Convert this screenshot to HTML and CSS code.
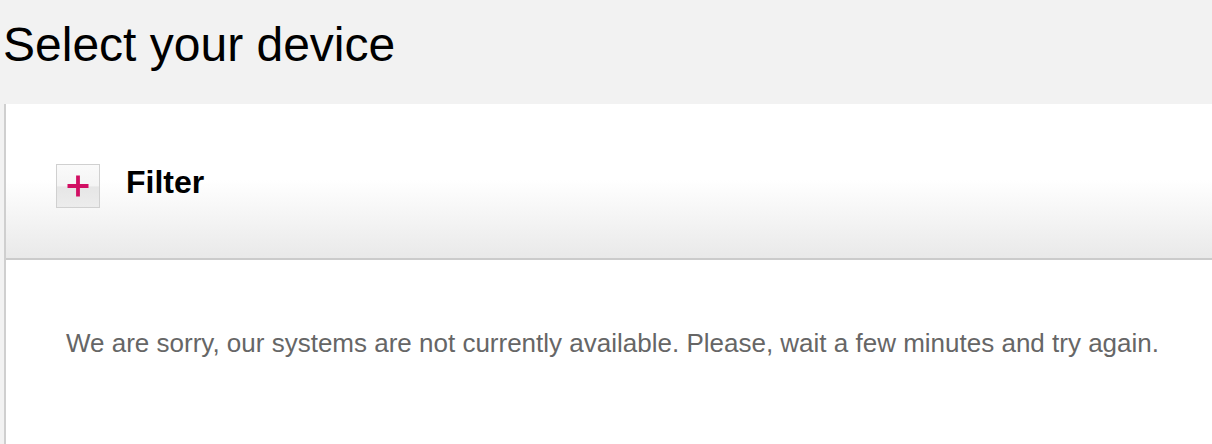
FILE: index.html
```html
<!DOCTYPE html>
<html lang="en">
<head>
    <meta charset="UTF-8">
    <title>Select your device</title>
    <link rel="stylesheet" href="styles.css">
</head>
<body>
    <h1 class="page-title">Select your device</h1>
    <div class="panel">
        <div class="panel-head">
            <button class="toggle" type="button">
                <svg width="24" height="24" viewBox="0 0 24 24">
                    <path d="M12 1.5v21M1.5 12h21" stroke="#d10f63" stroke-width="3.8" fill="none"/>
                </svg>
            </button>
            <span class="panel-title">Filter</span>
        </div>
        <div class="panel-body">
            <p class="msg">We are sorry, our systems are not currently available. Please, wait a few minutes and try again.</p>
        </div>
    </div>
</body>
</html>
```

FILE: styles.css
```css
*{
    margin: 0;
    padding: 0;
}
body{
    background: #f2f2f2;
    font-family: "Liberation Sans", Arial, sans-serif;
    overflow: hidden;
}
.page-title{
    font-weight: normal;
    font-size: 48px;
    line-height: 52px;
    color: #000;
    padding: 19px 0 33px 3px;
}
.panel{
    margin-left: 4px;
    width: 1300px;
    background: #fff;
    border-left: 2px solid #cfcfcf;
}
.panel-head{
    height: 94px;
    display: flex;
    align-items: flex-start;
    padding: 60px 0 0 50px;
    background: linear-gradient(#fff 0, #fff 76px, #e9e9e9 154px);
    border-bottom: 2px solid #cbcbcb;
}
.toggle{
    width: 44px;
    height: 44px;
    border: 1px solid #d0d0d0;
    background: linear-gradient(#fafafa 0, #f4f4f4 50%, #e6e6e6 52%, #ececec 100%);
    display: flex;
    align-items: center;
    justify-content: center;
}
.panel-title{
    font-weight: bold;
    font-size: 32px;
    line-height: 36px;
    margin-left: 26px;
    color: #000;
}
.panel-body{
    height: 200px;
    padding: 68px 0 0 60px;
}
.msg{
    font-size: 26px;
    line-height: 30px;
    color: #666;
}
```
